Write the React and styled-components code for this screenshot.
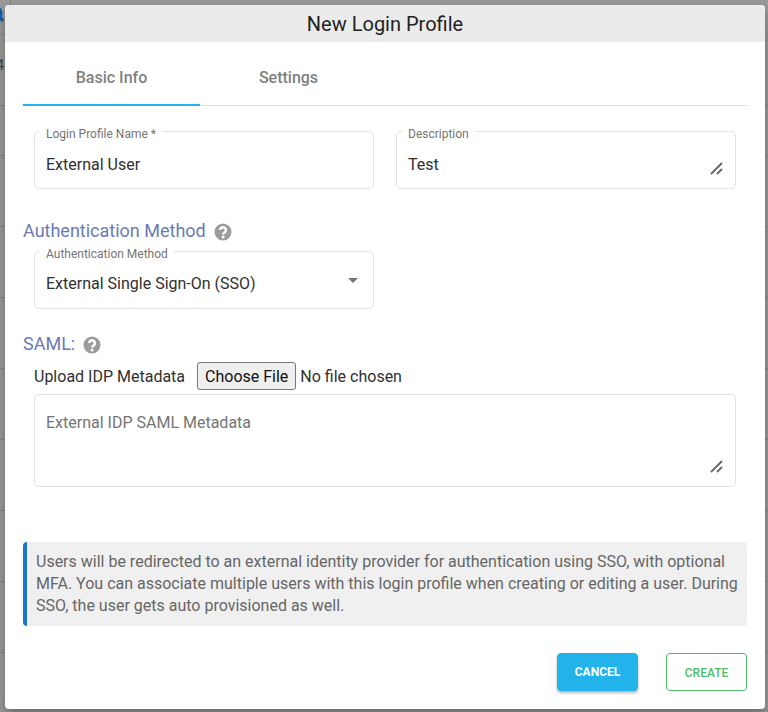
import React, { useState } from "react"
import styled, { createGlobalStyle } from "styled-components"

const INFO_TEXT = "Users will be redirected to an external identity provider for authentication using SSO, with optional MFA. You can associate multiple users with this login profile when creating or editing a user. During SSO, the user gets auto provisioned as well.";

const LIST_ROWS = ["4", "", "", "", "", "", "", "", ""];

const SearchIcon = () => (
    <svg width="20" height="20" viewBox="0 0 20 20" aria-hidden="true">
        <circle cx="11" cy="9" r="6" fill="none" stroke="#0f5cb4" strokeWidth="3" />
        <path d="M15 12l4 5" fill="none" stroke="#0f5cb4" strokeWidth="3" />
    </svg>
)

const ResizeGrip = () => (
    <Grip viewBox="0 0 13 13" aria-hidden="true">
        <path d="M1 12 12 1M7 12l5-5" fill="none" stroke="#666" strokeWidth="1.8" />
    </Grip>
)

const HelpIcon = () => (
    <svg width="18" height="18" viewBox="0 0 24 24" aria-hidden="true">
        <circle cx="12" cy="12" r="11.4" fill="#9b9d9c" />
        <path d="M8.3 9.4a3.8 3.8 0 1 1 6 3.1c-1.4 1-2.2 1.5-2.2 2.9" fill="none" stroke="#fff" strokeWidth="3.4" />
        <circle cx="12.1" cy="18.5" r="2" fill="#fff" />
    </svg>
)

const SectionTitle = ({ children }) => (
    <SectionHeading>
        {children}
        <HelpButton type="button" aria-label="Help"><HelpIcon /></HelpButton>
    </SectionHeading>
)

const App = () => {
    const [tab, setTab] = useState("Basic Info");
    const [name, setName] = useState("External User");
    const [description, setDescription] = useState("Test");
    const [metadata, setMetadata] = useState("");

    return (
        <>
            <GlobalStyle />
            <Page aria-hidden="true">
                <PageToolbar>
                    <SearchSlot><SearchIcon /></SearchSlot>
                </PageToolbar>
                {LIST_ROWS.map((value, index) =>
                    <PageRow key={index} $short={index === 1}>
                        <PageCell>{value}</PageCell>
                    </PageRow>)}
            </Page>
            <Overlay>
                <Dialog role="dialog" aria-labelledby="dialog-title">
                    <Title id="dialog-title">New Login Profile</Title>
                    <Body>
                        <Tabs role="tablist">
                            {["Basic Info", "Settings"].map(item =>
                                <Tab key={item} type="button" role="tab" aria-selected={tab === item} $active={tab === item} onClick={() => setTab(item)}>
                                    {item}
                                </Tab>)}
                        </Tabs>
                        <FieldGrid>
                            <Field>
                                <FieldLabel htmlFor="profile-name">Login Profile Name *</FieldLabel>
                                <TextInput id="profile-name" type="text" value={name} onChange={e => setName(e.target.value)} />
                            </Field>
                            <Field>
                                <FieldLabel htmlFor="description">Description</FieldLabel>
                                <TextArea id="description" rows={1} value={description} onChange={e => setDescription(e.target.value)} />
                                <ResizeGrip />
                            </Field>
                        </FieldGrid>
                        <Section>
                            <SectionTitle>Authentication Method</SectionTitle>
                            <SelectGrid>
                                <Field>
                                    <FieldLabel htmlFor="auth-method">Authentication Method</FieldLabel>
                                    <Select id="auth-method">
                                        <option>External Single Sign-On (SSO)</option>
                                    </Select>
                                    <Arrow viewBox="0 0 10 5" aria-hidden="true"><path d="M0 0h10L5 5z" fill="#757575" /></Arrow>
                                </Field>
                            </SelectGrid>
                        </Section>
                        <Section $compact>
                            <SectionTitle>SAML:</SectionTitle>
                            <UploadRow>
                                <label htmlFor="idp-file">Upload IDP Metadata</label>
                                <FileInput id="idp-file" type="file" />
                            </UploadRow>
                            <MetadataField>
                                <TextArea aria-label="External IDP SAML Metadata" placeholder="External IDP SAML Metadata" $tall value={metadata} onChange={e => setMetadata(e.target.value)} />
                                <ResizeGrip />
                            </MetadataField>
                        </Section>
                        <Info>{INFO_TEXT}</Info>
                        <Actions>
                            <Button type="button" $filled>CANCEL</Button>
                            <Button type="button">CREATE</Button>
                        </Actions>
                    </Body>
                </Dialog>
            </Overlay>
        </>
    )
}

const GlobalStyle = createGlobalStyle`
    *, *::before, *::after {
        box-sizing: border-box;
    }
    body {
        margin: 0;
        background: #999;
        color: #303030;
        font-family: Roboto, "Liberation Sans", sans-serif;
        font-size: 16px;
    }
    button, input, select, textarea {
        font: inherit;
        color: inherit;
    }`;

const Page = styled.div`
    height: 100vh;
    overflow: hidden;`;

const PageToolbar = styled.div`
    height: 35px;
    padding-top: 4px;
    border-bottom: 1px solid #868686;`;

const SearchSlot = styled.div`
    display: flex;
    justify-content: flex-end;
    align-items: flex-start;
    width: 11px;
    height: 30px;
    margin-top: -4px;
    padding: 4px 6px 0 0;
    border-right: 1px solid #808080;

    svg {
        flex-shrink: 0;
    }`;

const PageRow = styled.div`
    display: flex;
    align-items: center;
    height: ${props => props.$short ? "50px" : "71px"};
    padding-bottom: 10px;
    border-bottom: 1px solid #85858a;`;

const PageCell = styled.div`
    display: flex;
    justify-content: flex-end;
    width: 4px;
    font-size: 14px;
    color: #444;`;

const Overlay = styled.div`
    position: absolute;
    inset: 0;
    padding: 5px 3px 3px 5px;`;

const Dialog = styled.div`
    background: #fff;
    border-radius: 4px;
    overflow: hidden;
    box-shadow: 0 6px 12px rgba(0, 0, 0, 0.3);`;

const Title = styled.h1`
    margin: 0;
    padding-top: 1px;
    background: #ebebeb;
    font-size: 20px;
    font-weight: 400;
    line-height: 36px;
    text-align: center;
    color: #222;`;

const Body = styled.div`
    padding: 8px 18px 18px;`;

const Tabs = styled.div`
    display: flex;
    border-bottom: 1px solid #e0e0e0;`;

const Tab = styled.button`
    width: 177px;
    height: 56px;
    padding: 0;
    margin-bottom: -1px;
    border: 0;
    border-bottom: 2px solid ${props => props.$active ? "#22b3ea" : "transparent"};
    background: none;
    font-weight: 500;
    color: #808080;
    cursor: pointer;`;

const FieldGrid = styled.div`
    display: grid;
    grid-template-columns: 1fr 1fr;
    gap: 22px;
    padding: 0 11px;
    margin-top: 25px;`;

const SelectGrid = styled(FieldGrid)`
    margin-top: 8px;`;

const Field = styled.div`
    position: relative;
    border: 1px solid #e2e2e2;
    border-radius: 5px;`;

const MetadataField = styled(Field)`
    margin: 4px 11px 0;`;

const FieldLabel = styled.label`
    position: absolute;
    top: -5px;
    left: 5px;
    padding: 0 6px;
    background: #fff;
    font-size: 12px;
    line-height: 15px;
    color: #757575;`;

const TextInput = styled.input`
    display: block;
    width: 100%;
    height: 56px;
    padding: 9px 11px 0;
    border: 0;
    border-radius: 5px;
    background: none;`;

const TextArea = styled.textarea`
    display: block;
    width: 100%;
    height: ${props => props.$tall ? "91px" : "56px"};
    padding: ${props => props.$tall ? "17px" : "22px"} 11px 10px;
    border: 0;
    background: none;
    line-height: 22px;
    resize: none;
    overflow: hidden;

    &::placeholder {
        color: #757575;
    }`;

const Select = styled.select`
    display: block;
    width: 100%;
    height: 56px;
    padding: 7px 30px 0 11px;
    border: 0;
    background: none;
    appearance: none;`;

const Arrow = styled.svg`
    position: absolute;
    right: 15px;
    top: 26px;
    width: 10px;
    height: 5px;
    pointer-events: none;`;

const Grip = styled.svg`
    position: absolute;
    right: 12px;
    bottom: 13px;
    width: 13px;
    height: 13px;
    pointer-events: none;`;

const Section = styled.section`
    margin-top: ${props => props.$compact ? "22px" : "29px"};`;

const SectionHeading = styled.h2`
    display: flex;
    align-items: center;
    gap: 8px;
    margin: 0;
    font-size: 18px;
    font-weight: 400;
    line-height: 25px;
    color: #6b7ab5;`;

const HelpButton = styled.button`
    display: flex;
    padding: 2px 0 0;
    border: 0;
    background: none;
    cursor: pointer;`;

const UploadRow = styled.div`
    display: flex;
    align-items: center;
    gap: 12px;
    padding: 0 11px;
    margin-top: 6px;`;

const FileInput = styled.input`
    height: 28px;

    &::file-selector-button {
        height: 28px;
        padding: 0 7px;
        margin-right: 4px;
        border: 1px solid #767676;
        border-radius: 3px;
        background: #efefef;
        font: inherit;
        color: #111;
    }`;

const Info = styled.p`
    margin: 55px 0 0;
    padding: 9px;
    border-left: 4px solid #1976d2;
    border-radius: 4px;
    background: #f0f0f0;
    line-height: 22px;
    color: #666;`;

const Actions = styled.div`
    display: flex;
    justify-content: flex-end;
    gap: 28px;
    margin-top: 27px;`;

const Button = styled.button`
    width: 81px;
    height: 38px;
    padding: ${props => props.$filled ? "0" : "2px 0 0"};
    border: 1px solid ${props => props.$filled ? "#22b3ea" : "#4dbd69"};
    border-radius: 4px;
    background: ${props => props.$filled ? "#22b3ea" : "#fff"};
    box-shadow: ${props => props.$filled ? "0 2px 3px rgba(0, 0, 0, 0.3)" : "none"};
    font-size: 12px;
    font-weight: ${props => props.$filled ? 700 : 500};
    color: ${props => props.$filled ? "#fff" : "#4dbd69"};
    cursor: pointer;`;

export default App;
